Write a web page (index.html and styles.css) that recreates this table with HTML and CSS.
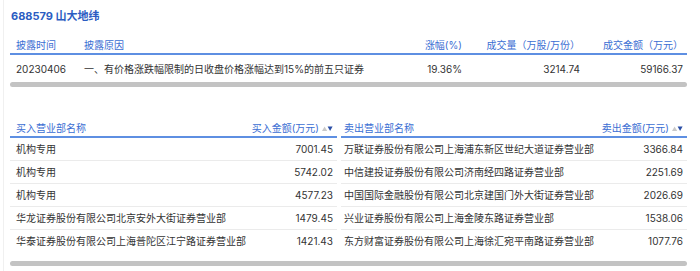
FILE: index.html
```html
<!DOCTYPE html>
<html lang="zh-CN">
<head>
<meta charset="utf-8">
<title>688579 山大地纬</title>
<link rel="stylesheet" href="styles.css">
</head>
<body>
<div class="page">
  <h1 class="title">688579 山大地纬</h1>

  <div class="scroller">
    <table class="summary">
      <colgroup>
        <col class="c1"><col class="c2"><col class="c3"><col class="c4"><col class="c5">
      </colgroup>
      <thead>
        <tr>
          <th>披露时间</th>
          <th>披露原因</th>
          <th class="num">涨幅(%)</th>
          <th class="num">成交量（万股/万份）</th>
          <th class="num">成交金额（万元）</th>
        </tr>
      </thead>
      <tbody>
        <tr>
          <td>20230406</td>
          <td>一、有价格涨跌幅限制的日收盘价格涨幅达到15%的前五只证券</td>
          <td class="num">19.36%</td>
          <td class="num">3214.74</td>
          <td class="num">59166.37</td>
        </tr>
      </tbody>
    </table>
    <div class="sbar"></div>
  </div>

  <div class="scroller second">
    <div class="pair">
      <table class="trades buy">
        <thead>
          <tr>
            <th>买入营业部名称</th>
            <th class="num">买入金额(万元)<svg class="sort" width="11" height="7" viewBox="0 0 11 7"><polygon points="0,6 2.6,1.5 5.2,6" fill="#c9c9c9"/><polygon points="5.6,1.5 10.6,1.5 8.1,6" fill="#2a4ea6"/></svg></th>
          </tr>
        </thead>
        <tbody>
          <tr><td>机构专用</td><td class="num">7001.45</td></tr>
          <tr><td>机构专用</td><td class="num">5742.02</td></tr>
          <tr><td>机构专用</td><td class="num">4577.23</td></tr>
          <tr><td>华龙证券股份有限公司北京安外大街证券营业部</td><td class="num">1479.45</td></tr>
          <tr><td>华泰证券股份有限公司上海普陀区江宁路证券营业部</td><td class="num">1421.43</td></tr>
        </tbody>
      </table>
      <table class="trades sell">
        <thead>
          <tr>
            <th>卖出营业部名称</th>
            <th class="num">卖出金额(万元)<svg class="sort" width="11" height="7" viewBox="0 0 11 7"><polygon points="0,6 2.6,1.5 5.2,6" fill="#c9c9c9"/><polygon points="5.6,1.5 10.6,1.5 8.1,6" fill="#2a4ea6"/></svg></th>
          </tr>
        </thead>
        <tbody>
          <tr><td>万联证券股份有限公司上海浦东新区世纪大道证券营业部</td><td class="num">3366.84</td></tr>
          <tr><td>中信建投证券股份有限公司济南经四路证券营业部</td><td class="num">2251.69</td></tr>
          <tr><td>中国国际金融股份有限公司北京建国门外大街证券营业部</td><td class="num">2026.69</td></tr>
          <tr><td>兴业证券股份有限公司上海金陵东路证券营业部</td><td class="num">1538.06</td></tr>
          <tr><td>东方财富证券股份有限公司上海徐汇宛平南路证券营业部</td><td class="num">1077.76</td></tr>
        </tbody>
      </table>
    </div>
    <div class="sbar"></div>
  </div>
</div>
</body>
</html>
```

FILE: styles.css
```css
html, body {
  margin: 0;
  padding: 0;
  background: #ffffff;
}

body {
  font-family: "Inter", "Noto Sans CJK SC", sans-serif;
  font-size: 10px;
  color: #333333;
}

.page {
  margin-left: 3px;
  border-left: 1px solid #f0f0f0;
  padding: 9px 13px 0 6px;
  width: 677px;
  height: 262px;
}

.title {
  margin: 0;
  font-size: 11px;
  line-height: 14px;
  font-weight: 700;
  color: #2b5cc2;
  padding-left: 1px;
}

.scroller {
  margin-top: 12px;
}

.scroller.second {
  margin-top: 31px;
}

table {
  border-collapse: collapse;
  table-layout: fixed;
}

.summary {
  width: 677px;
}

.c1 { width: 68px; }
.c2 { width: 320px; }
.c3 { width: 68px; }
.c4 { width: 118px; }
.c5 { width: 103px; }

th {
  font-weight: 400;
  color: #3b6ed3;
  text-align: left;
  line-height: 14px;
  padding: 3px 4px 1px 6px;
  border-bottom: 2px solid #5e8fe2;
  white-space: nowrap;
}

td {
  line-height: 14px;
  white-space: nowrap;
  text-align: left;
}

.summary td {
  padding: 7px 4px 4px 6px;
}

.num {
  text-align: right;
}

.sbar {
  margin-top: 2px;
  height: 5px;
  border-radius: 3px;
  background: #c3c3c3;
}

.second .sbar {
  margin-top: 9px;
}

.pair {
  display: flex;
  gap: 4px;
}

.trades.buy {
  width: 327px;
}

.trades.sell {
  width: 346px;
}

.trades td {
  padding: 4px 4px 4px 6px;
  border-bottom: 1px solid #ebebeb;
}

.trades tr:last-child td {
  border-bottom: none;
}

.trades.sell th:first-child,
.trades.sell td:first-child {
  padding-left: 3px;
}

.trades.buy td:first-child { width: 230px; }
.trades.sell td:first-child { width: 260px; }

.sort {
  margin-left: 3px;
  vertical-align: 0px;
}
```
